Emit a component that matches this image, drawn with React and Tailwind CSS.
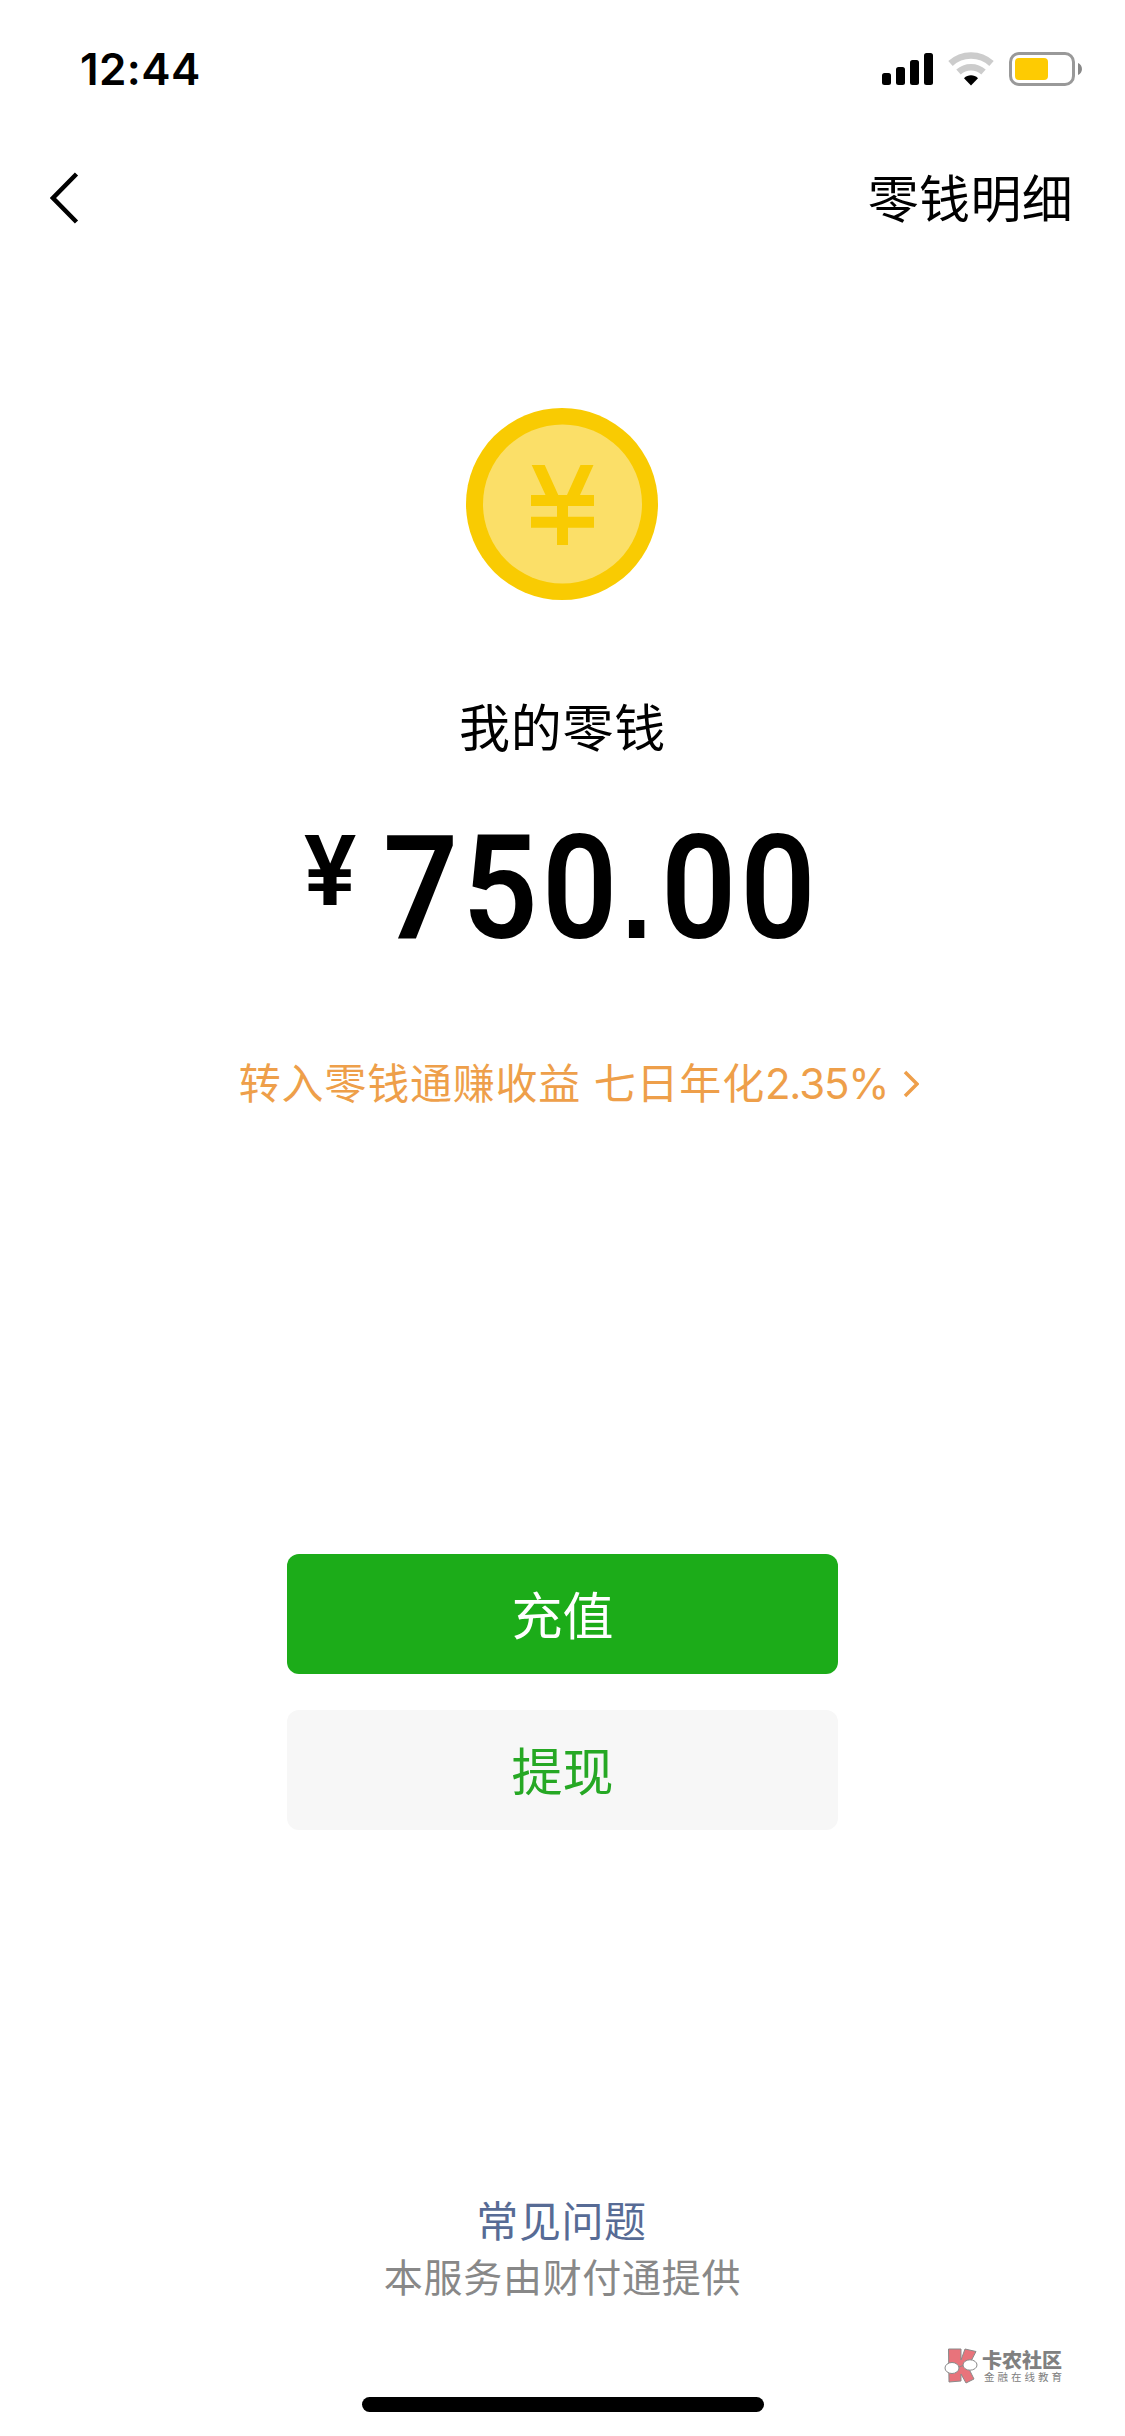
const SignalIcon = () => (
    <svg className="w-[51px] h-8" viewBox="0 0 51 32">
        <rect x="0" y="20" width="9" height="12" rx="2.5" />
        <rect x="14" y="14" width="9" height="18" rx="2.5" />
        <rect x="28" y="7" width="9" height="25" rx="2.5" />
        <rect x="42" y="0" width="9" height="32" rx="2.5" />
    </svg>
);

const WifiIcon = () => (
    <svg className="w-[46px] h-[34px]" viewBox="0 0 46 34" fill="none">
        <path d="M2.5 11.5C14 0.8 32 0.8 43.5 11.5" stroke="#cccccc" strokeWidth="6.5" />
        <path d="M10.5 20C17.5 13.5 28.5 13.5 35.5 20" stroke="#cccccc" strokeWidth="6.5" />
        <path d="M16 26.2C20 22.4 26 22.4 30 26.2L23 33.5Z" fill="#000000" />
    </svg>
);

const BatteryIcon = () => (
    <svg className="w-[74px] h-[34px]" viewBox="0 0 74 34" fill="none">
        <rect x="1.5" y="1.5" width="63" height="31" rx="8.5" stroke="#999999" strokeWidth="3" />
        <rect x="6" y="6" width="33" height="22" rx="4" fill="#fecb02" />
        <path d="M69 11C74.3 13 74.3 21 69 23Z" fill="#888888" />
    </svg>
);

const CoinIcon = () => (
    <svg className="w-48 h-48" viewBox="0 0 192 192" fill="none">
        <circle cx="96" cy="96" r="96" fill="#f9cb02" />
        <circle cx="96.5" cy="96" r="79.5" fill="#fbdf68" />
        <path d="M65.7 57H78.7L92.3 87H79.5ZM114.5 57H127.5L114 87H101Z" fill="#f9cb02" />
        <path d="M65 92.5H128M65 114.2H128" stroke="#f9cb02" strokeWidth="11" />
        <path d="M96.5 88V137" stroke="#f9cb02" strokeWidth="11" />
    </svg>
);

const CommunityLogo = () => (
    <svg className="w-[34px] h-[36px]" viewBox="0 0 34 36">
        <path d="M4.5 1H17V12L21 1L32 3.5L24 19L30 31L22 35L17 26V33L5 34Z" fill="#e8737b" stroke="#8a8a8a" strokeWidth="1" />
        <ellipse cx="8" cy="20" rx="7" ry="5.5" fill="#ffffff" stroke="#8a8a8a" />
        <ellipse cx="26" cy="17" rx="7" ry="5.2" fill="#ffffff" stroke="#8a8a8a" />
        <path d="M15 19L19 17.5" stroke="#8a8a8a" />
    </svg>
);

export default function App() {
    return (
        <div className="relative flex flex-col items-center w-[1125px] h-[2436px] bg-white text-black overflow-hidden font-['Inter','Noto_Sans_CJK_SC',sans-serif]">
            {/* Status bar */}
            <header className="flex w-full h-[132px] justify-between pl-20 pr-[42px] pt-[52px]">
                <span className="text-[44px] leading-[34px] font-semibold tracking-[0.4px]">12:44</span>
                <div className="flex h-[34px] items-center">
                    <SignalIcon />
                    <div className="ml-[15px]"><WifiIcon /></div>
                    <div className="ml-[15px]"><BatteryIcon /></div>
                </div>
            </header>

            {/* Nav bar */}
            <nav className="flex w-full h-[132px] items-center justify-between pl-[50px] pr-[52px]">
                <svg className="w-[30px] h-[54px]" viewBox="0 0 30 54" fill="none">
                    <path d="M26.5 3L3 27L26.5 51" stroke="#000000" strokeWidth="4.5" />
                </svg>
                <span className="pt-1 text-[51px] leading-[60px] tracking-[0.3px]">零钱明细</span>
            </nav>

            {/* Balance */}
            <main className="flex flex-col items-center w-full">
                <div className="mt-36 mr-px"><CoinIcon /></div>
                <h1 className="mt-[99px] mb-px text-[51px] leading-[60px] tracking-[0.8px]">我的零钱</h1>
                <div className="mt-[68px] w-[517px] h-[120px] flex items-start font-['Roboto',sans-serif] font-semibold whitespace-nowrap">
                    <span className="shrink-0 w-[79px] text-[98px] leading-[88px]">¥</span>
                    <span className="shrink-0 origin-left scale-x-[0.91] text-[145px] leading-[120px] tracking-[4.5px]">
                        750<span className="font-['Liberation_Sans',sans-serif] font-bold text-[120px] leading-none tracking-[10px]">.</span>00
                    </span>
                </div>
                <a className="mt-[108px] ml-[33px] flex items-center text-[#ee9f4a]">
                    <span className="text-[42px] leading-[56px] tracking-[0.8px]">
                        转入零钱通赚收益 七日年化
                        <span className="tracking-[-1.2px]">2.35%</span>
                    </span>
                    <svg className="ml-[15px] w-4 h-7" viewBox="0 0 16 28" fill="none">
                        <path d="M2 2L14 14L2 26" stroke="currentColor" strokeWidth="3.5" />
                    </svg>
                </a>
            </main>

            {/* Actions */}
            <section className="mt-[442px] flex flex-col gap-9 w-[551px]">
                <button className="h-[120px] pt-1.5 rounded-xl bg-[#1cac19] text-white text-[51px]">充值</button>
                <button className="h-[120px] pt-1.5 rounded-xl bg-[#f7f7f7] text-[#26a824] text-[51px]">提现</button>
            </section>

            <footer className="mt-[364px] flex flex-col items-center">
                <a className="mr-0.5 text-[42px] leading-[56px] tracking-[0.6px] text-[#576b95]">常见问题</a>
                <p className="text-[39px] leading-[56px] tracking-[0.7px] text-[#888888]">本服务由财付通提供</p>
            </footer>

            {/* Home indicator */}
            <div className="mt-auto mb-6 w-[402px] h-[15px] rounded-full bg-black"></div>

            {/* Watermark */}
            <div className="absolute right-[60px] bottom-[52px] flex items-center gap-1 text-[#808080]">
                <CommunityLogo />
                <div className="flex flex-col">
                    <span className="text-[20px] leading-[22px] font-black">卡农社区</span>
                    <span className="pl-0.5 text-[10.5px] leading-[11px] tracking-[3px]">金融在线教育</span>
                </div>
            </div>
        </div>
    );
}
